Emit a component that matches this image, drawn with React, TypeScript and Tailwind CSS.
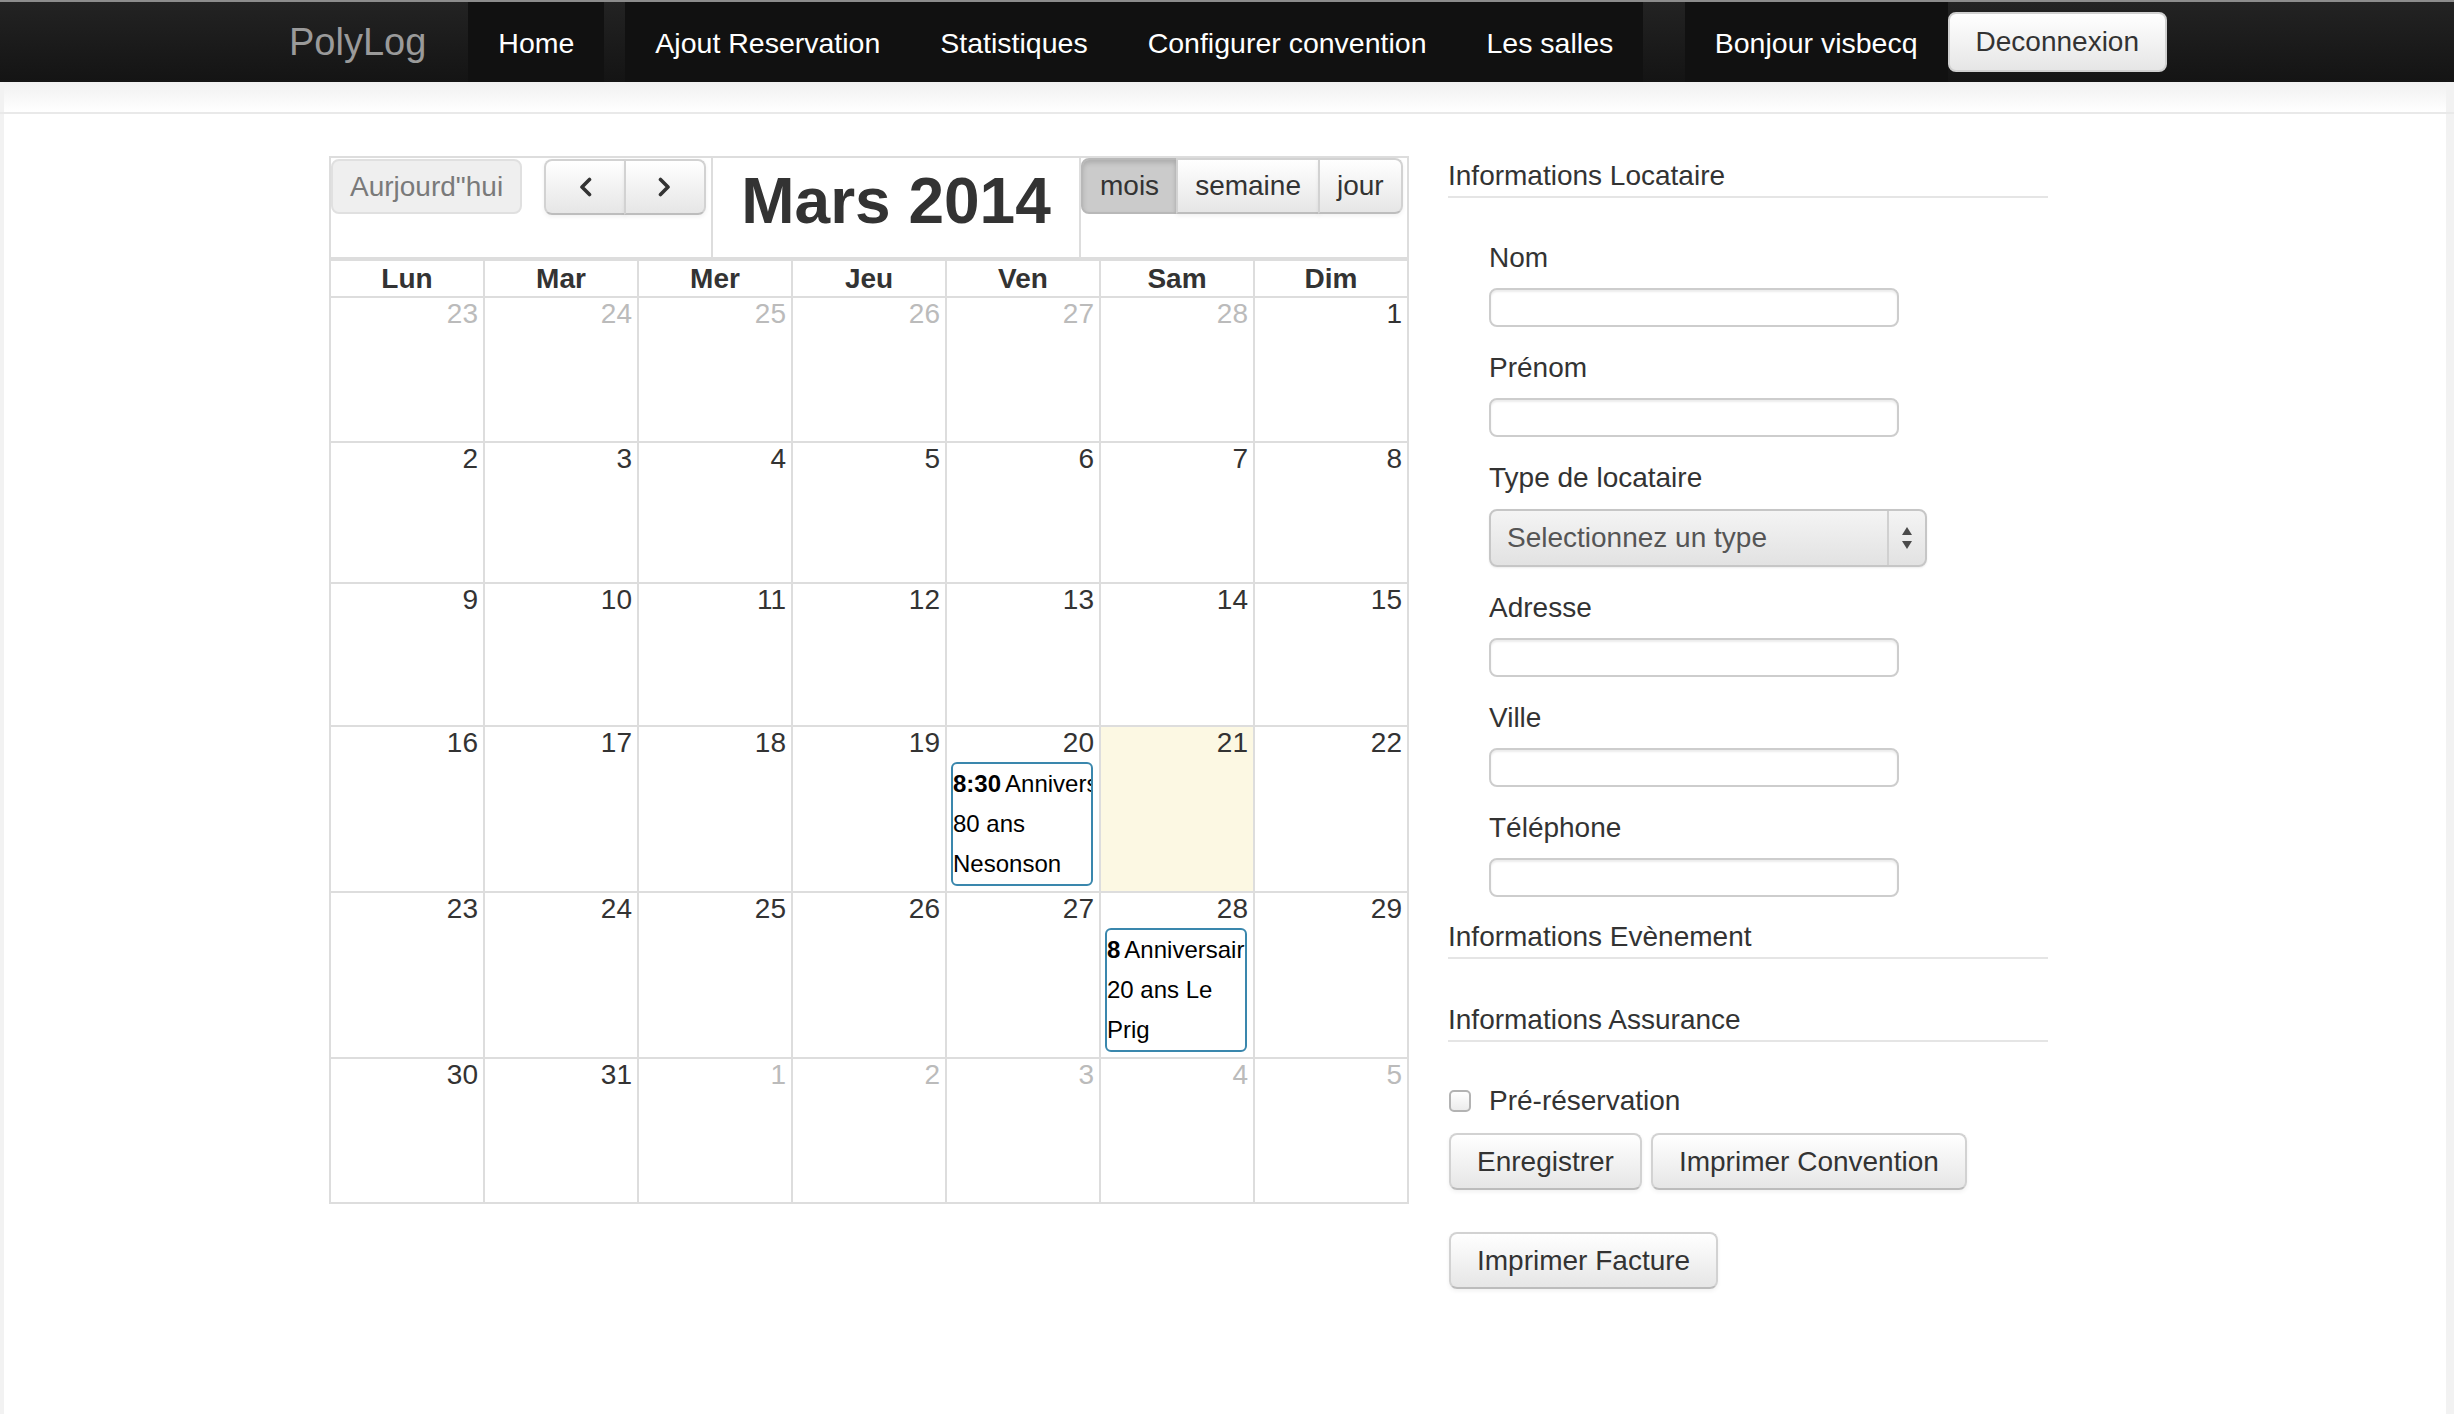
import React from "react";

const navItems = ["Ajout Reservation", "Statistiques", "Configurer convention", "Les salles"];
const dayNames = ["Lun", "Mar", "Mer", "Jeu", "Ven", "Sam", "Dim"];

type Ev = { time: string; title: string };
type Day = { n: number; other?: boolean; today?: boolean; ev?: Ev };

const weeks: { h: number; days: Day[] }[] = [
  {
    h: 145,
    days: [
      { n: 23, other: true },
      { n: 24, other: true },
      { n: 25, other: true },
      { n: 26, other: true },
      { n: 27, other: true },
      { n: 28, other: true },
      { n: 1 },
    ],
  },
  { h: 141, days: [2, 3, 4, 5, 6, 7, 8].map((n) => ({ n })) },
  { h: 143, days: [9, 10, 11, 12, 13, 14, 15].map((n) => ({ n })) },
  {
    h: 166,
    days: [
      { n: 16 },
      { n: 17 },
      { n: 18 },
      { n: 19 },
      { n: 20, ev: { time: "8:30", title: "Anniversaire 80 ans Nesonson" } },
      { n: 21, today: true },
      { n: 22 },
    ],
  },
  {
    h: 166,
    days: [
      { n: 23 },
      { n: 24 },
      { n: 25 },
      { n: 26 },
      { n: 27 },
      { n: 28, ev: { time: "8", title: "Anniversaire 20 ans Le Prig" } },
      { n: 29 },
    ],
  },
  {
    h: 145,
    days: [
      { n: 30 },
      { n: 31 },
      { n: 1, other: true },
      { n: 2, other: true },
      { n: 3, other: true },
      { n: 4, other: true },
      { n: 5, other: true },
    ],
  },
];

function Navbar() {
  return (
    <header className="h-[82px] border-t-2 border-[#8c8c8c] bg-linear-to-b from-[#232323] to-[#141414]">
      <div className="mx-auto flex h-full w-[1880px] items-stretch text-[28.5px] leading-[82px] text-white">
        <span className="-ml-[40px] pl-[42px] pr-[42px] text-[38px] leading-[80px] text-[#9a9a9a]">PolyLog</span>
        <a className="bg-[#111] px-[30px]">Home</a>
        <span className="w-[21px]" />
        {navItems.map((item) => (
          <a key={item} className="bg-[#111] px-[30px]">
            {item}
          </a>
        ))}
        <div className="flex-1" />
        <span className="bg-[#111] px-[30px]">Bonjour visbecq</span>
        <div className="flex items-center">
          <button className="h-[60px] rounded-[8px] border-2 border-[#d0d0d0] bg-linear-to-b from-white to-[#e6e6e6] px-[26px] text-[28px] leading-[56px] text-[#333]">
            Deconnexion
          </button>
        </div>
      </div>
    </header>
  );
}

const btnBase =
  "h-[56px] border-2 border-[#d2d2d2] border-b-[#bdbdbd] bg-linear-to-b from-white to-[#e6e6e6] text-[28px] leading-[52px] text-[#333] shadow-[0_2px_4px_rgba(0,0,0,0.06)]";

function Chevron({ dir }: { dir: "left" | "right" }) {
  return (
    <svg width="16" height="20" viewBox="0 0 16 20" className="mx-auto">
      <path
        d={dir === "left" ? "M12.5 2.5 L5 10 L12.5 17.5" : "M3.5 2.5 L11 10 L3.5 17.5"}
        fill="none"
        stroke="#333"
        strokeWidth="3.6"
        strokeLinecap="round"
        strokeLinejoin="round"
      />
    </svg>
  );
}

function Calendar() {
  return (
    <div className="w-[1080px] self-start border-l-2 border-t-2 border-[#ddd]">
      {/* barre d'outils */}
      <div className="flex h-[103px] border-b-4 border-[#ddd]">
        <div className="flex w-[382px] items-start gap-[22px] border-r-2 border-[#ddd] pt-[1px]">
          <button className="h-[55px] rounded-[8px] border-2 border-[#e0e0e0] bg-[#efefef] px-[17px] text-[28px] leading-[51px] text-[#7a7a7a]">
            Aurjourd"hui
          </button>
          <div className="flex">
            <button className={`${btnBase} w-[82px] rounded-l-[8px]`}>
              <Chevron dir="left" />
            </button>
            <button className={`${btnBase} -ml-[2px] w-[82px] rounded-r-[8px]`}>
              <Chevron dir="right" />
            </button>
          </div>
        </div>
        <div className="w-[368px] border-r-2 border-[#ddd] text-center">
          <h2 className="mt-[7px] text-[64px] font-bold leading-[72px] text-[#333]">Mars 2014</h2>
        </div>
        <div className="flex flex-1 items-start border-r-2 border-[#ddd]">
          <button className="h-[56px] rounded-l-[8px] border-2 border-[#b8b8b8] bg-[#cbcbcb] px-[17px] text-[28px] leading-[52px] text-[#333] shadow-[inset_0_3px_5px_rgba(0,0,0,0.15)]">
            mois
          </button>
          <button className={`${btnBase} -ml-[2px] px-[17px]`}>semaine</button>
          <button className={`${btnBase} -ml-[2px] rounded-r-[8px] px-[17px]`}>jour</button>
        </div>
      </div>

      {/* jours */}
      <div className="grid grid-cols-7">
        {dayNames.map((d) => (
          <div
            key={d}
            className="h-[37px] border-b-2 border-r-2 border-[#ddd] text-center text-[28px] font-bold leading-[36px] text-[#333]"
          >
            {d}
          </div>
        ))}
      </div>

      {weeks.map((w, wi) => (
        <div key={wi} className="grid grid-cols-7" style={{ height: w.h }}>
          {w.days.map((d, di) => (
            <div
              key={di}
              className={`border-b-2 border-r-2 border-[#ddd] ${d.today ? "bg-[#fcf8e3]" : "bg-white"}`}
            >
              <div
                className={`pr-[5px] text-right text-[28px] leading-[32px] ${d.other ? "text-[#bbb]" : "text-[#333]"}`}
              >
                {d.n}
              </div>
              {d.ev && (
                <div className="mt-[3px] ml-[4px] mr-[6px] h-[124px] overflow-hidden rounded-[6px] border-2 border-[#3a87ad] bg-white text-[24px] leading-[40px] text-black">
                  <span className="pr-[4px] font-bold">{d.ev.time}</span>
                  <span>{d.ev.title}</span>
                </div>
              )}
            </div>
          ))}
        </div>
      ))}
    </div>
  );
}

function Legend({ children, className = "" }: { children: React.ReactNode; className?: string }) {
  return (
    <div className={`h-[42px] border-b-2 border-[#e5e5e5] text-[28px] leading-[40px] text-[#333] ${className}`}>
      {children}
    </div>
  );
}

function Field({ label }: { label: string }) {
  return (
    <div>
      <div className="h-[40px] text-[28px] leading-[40px] text-[#333]">{label}</div>
      <input className="mt-[10px] block h-[39px] w-[410px] rounded-[8px] border-2 border-[#cdcdcd] bg-white shadow-[inset_0_2px_2px_rgba(0,0,0,0.075)]" />
    </div>
  );
}

const formBtn =
  "h-[57px] rounded-[8px] border-2 border-[#d2d2d2] border-b-[#bcbcbc] bg-linear-to-b from-white to-[#e6e6e6] px-[26px] text-[28px] leading-[53px] text-[#333] shadow-[0_2px_4px_rgba(0,0,0,0.06)]";

function Form() {
  return (
    <div className="w-[600px]">
      <Legend>Informations Locataire</Legend>
      <div className="flex flex-col gap-[21px] pl-[41px] pt-[40px]">
        <Field label="Nom" />
        <Field label="Prénom" />
        <div>
          <div className="h-[40px] text-[28px] leading-[40px] text-[#333]">Type de locataire</div>
          <div className="mt-[11px] flex h-[58px] w-[438px] rounded-[8px] border-2 border-[#c6c6c6] bg-linear-to-b from-[#f4f4f4] to-[#e2e2e2] shadow-[0_1px_2px_rgba(0,0,0,0.08)]">
            <div className="flex-1 pl-[16px] text-[28px] leading-[54px] text-[#555]">Selectionnez un type</div>
            <div className="flex w-[38px] items-center justify-center border-l-2 border-[#d0d0d0]">
              <svg width="12" height="24" viewBox="0 0 12 24">
                <path d="M6 1 L11 9 L1 9 Z" fill="#4a4a4a" />
                <path d="M1 15 L11 15 L6 23 Z" fill="#4a4a4a" />
              </svg>
            </div>
          </div>
        </div>
        <Field label="Adresse" />
        <Field label="Ville" />
        <Field label="Téléphone" />
      </div>

      <Legend className="mt-[20px]">Informations Evènement</Legend>
      <Legend className="mt-[41px]">Informations Assurance</Legend>

      <div className="mt-[39px] flex h-[40px] items-center gap-[18px] pl-[1px]">
        <div className="h-[22px] w-[22px] rounded-[5px] border-2 border-[#b3b3b3] bg-linear-to-b from-white to-[#ececec]" />
        <span className="text-[28px] leading-[40px] text-[#333]">Pré-réservation</span>
      </div>

      <div className="mt-[12px] flex gap-[9px] pl-[1px]">
        <button className={formBtn}>Enregistrer</button>
        <button className={formBtn}>Imprimer Convention</button>
      </div>
      <div className="mt-[42px] pl-[1px]">
        <button className={formBtn}>Imprimer Facture</button>
      </div>
    </div>
  );
}

export default function App() {
  return (
    <div className="min-h-screen bg-white font-['Liberation_Sans',Arial,sans-serif] text-[#333]">
      <Navbar />
      <div className="h-[32px] border-b-2 border-[#e9e9e9] bg-linear-to-b from-[#f0f0f0] to-white shadow-[inset_4px_0_0_#f2f2f2,inset_-8px_0_0_#f2f2f2]" />
      <main className="min-h-[1300px] shadow-[inset_4px_0_0_#f2f2f2,inset_-8px_0_0_#f2f2f2]">
        <div className="mx-auto flex w-[1880px] gap-[39px] pl-[42px] pt-[42px]">
          <Calendar />
          <Form />
        </div>
      </main>
    </div>
  );
}
